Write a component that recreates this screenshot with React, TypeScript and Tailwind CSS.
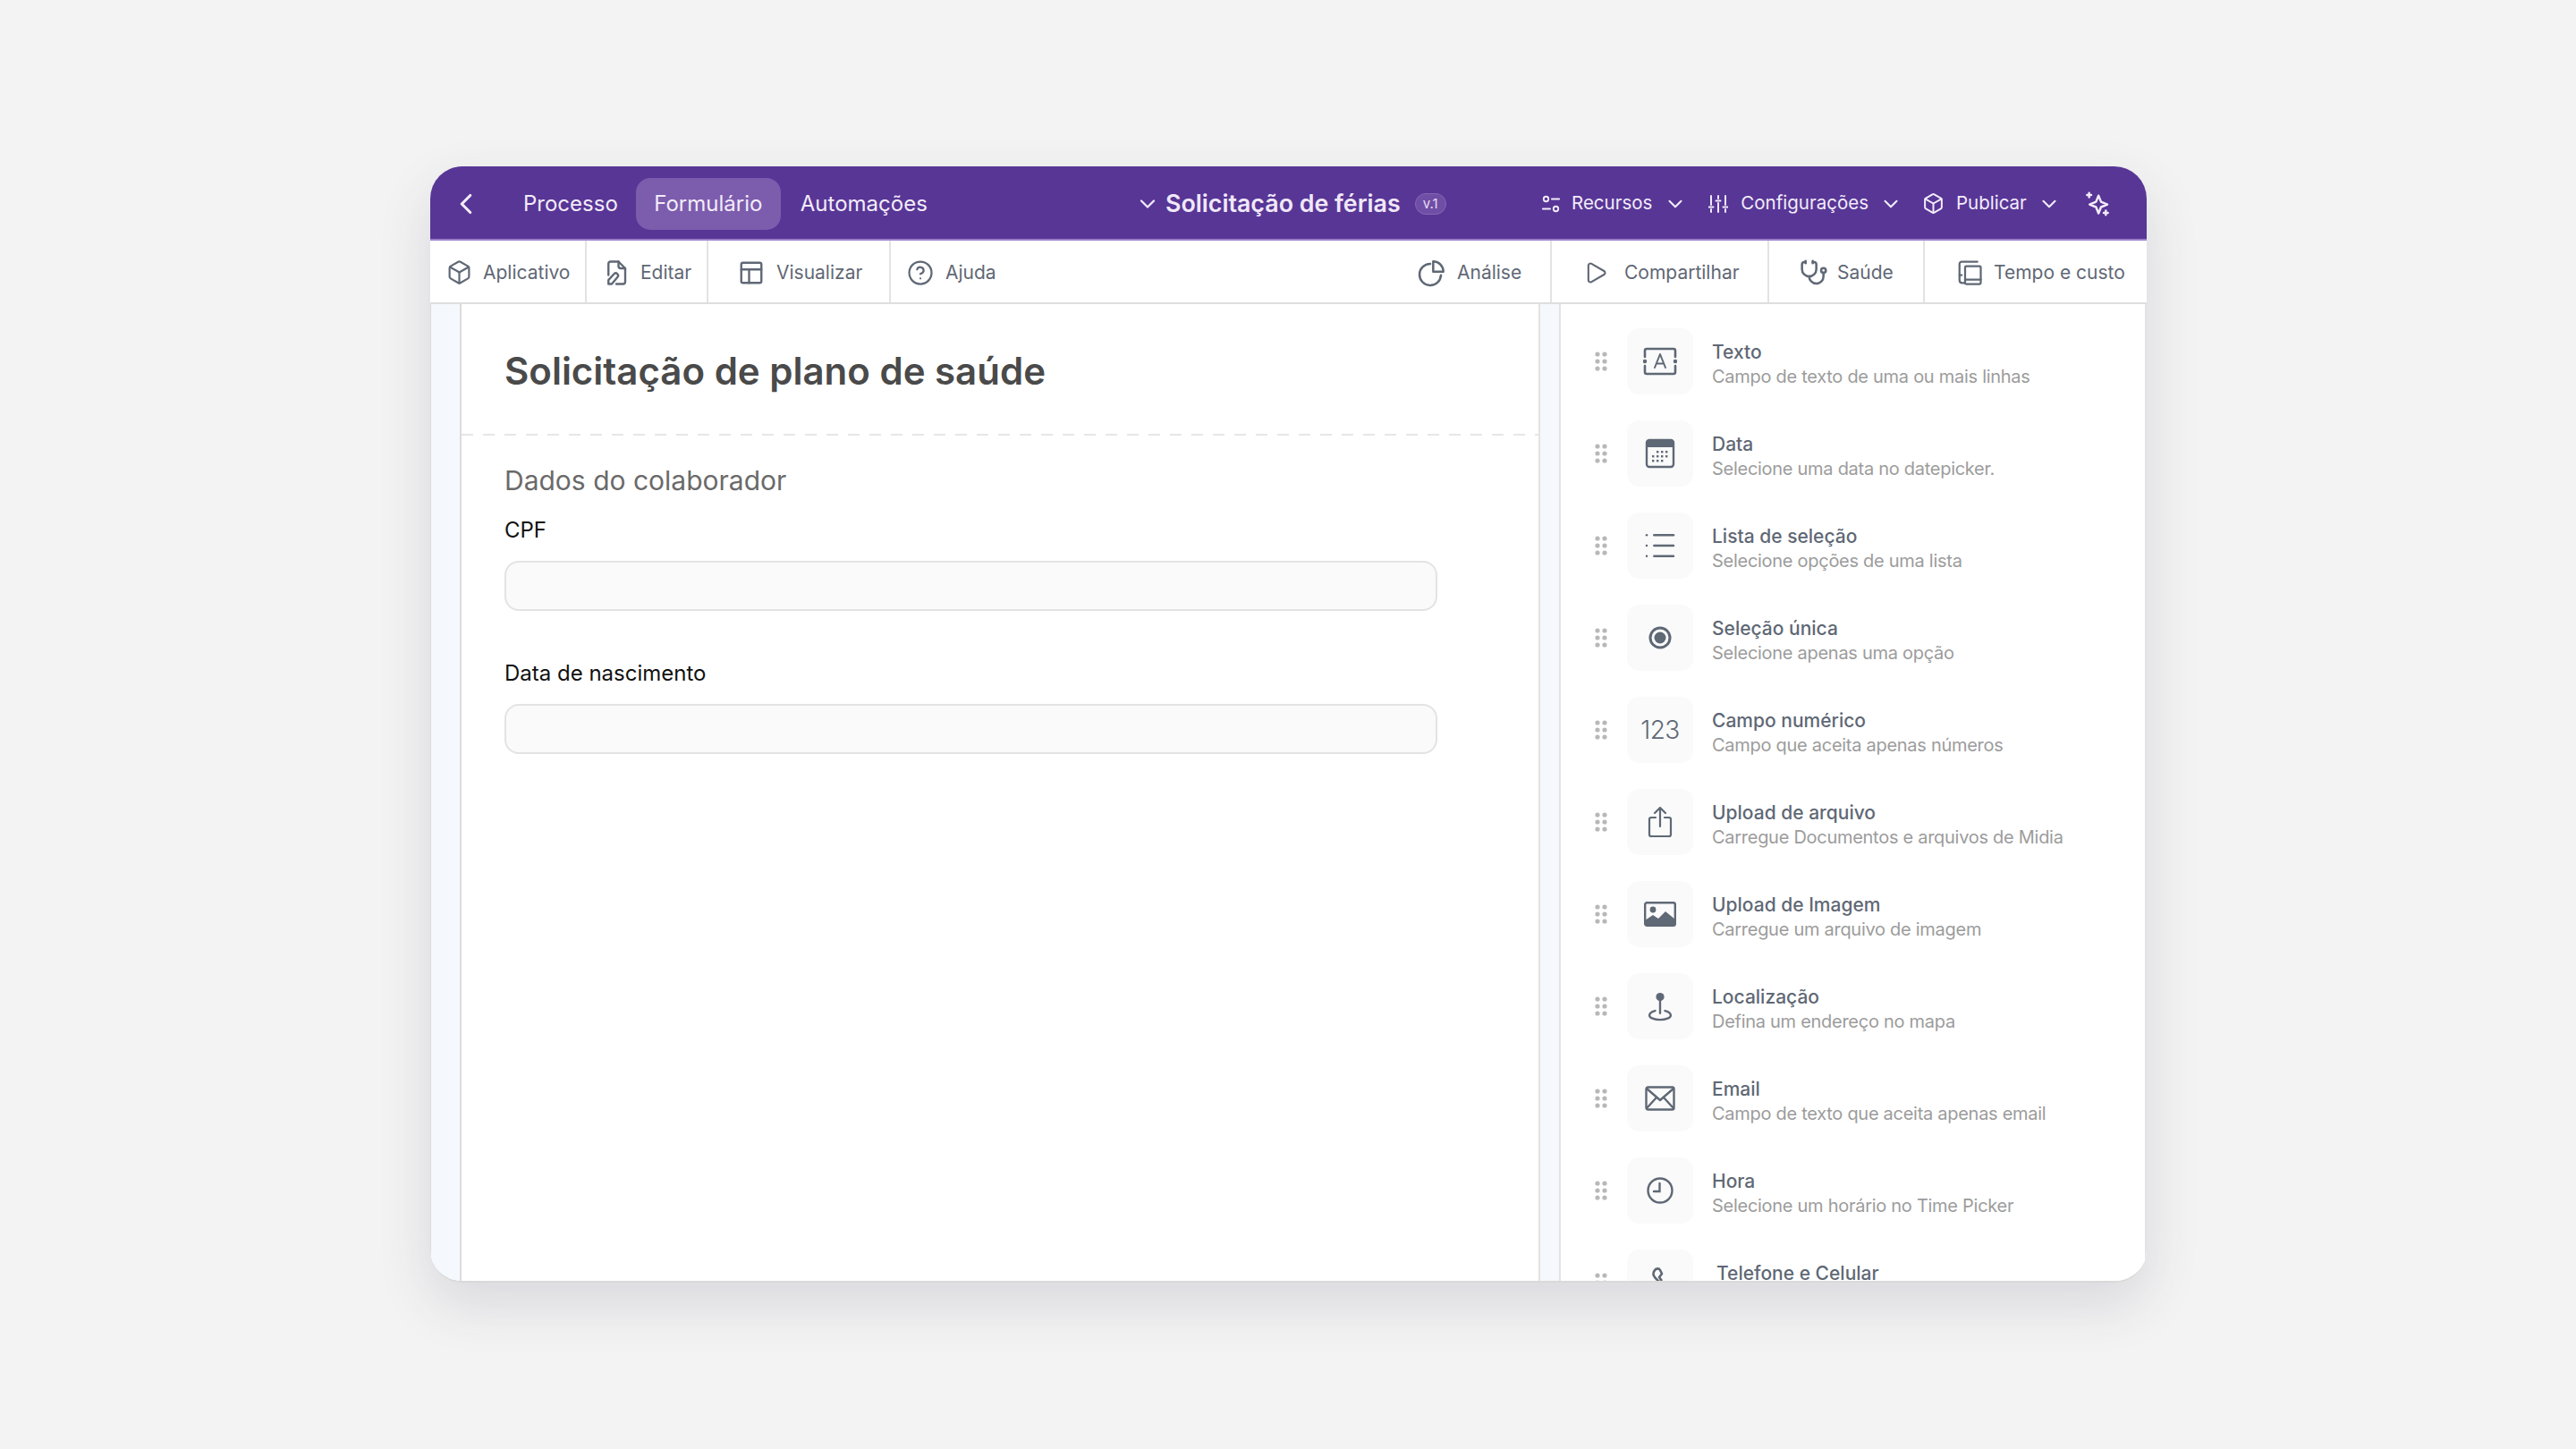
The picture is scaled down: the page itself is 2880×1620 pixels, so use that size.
import { Box, ChevronDown, ChevronLeft, CircleHelp, List, Play, Stethoscope } from 'lucide-react'
import type { ReactNode } from 'react'

const Ico = ({ size = 28, children, sw = 2 }: { size?: number; children: ReactNode; sw?: number }) => (
  <svg width={size} height={size} viewBox="0 0 24 24" fill="none" stroke="currentColor" strokeWidth={sw} strokeLinecap="round" strokeLinejoin="round" className="shrink-0">
    {children}
  </svg>
)

const Grip = () => (
  <svg width="14" height="22" viewBox="0 0 14 22" fill="#b8b8b8" className="shrink-0">
    <circle cx="3" cy="3" r="2.6" />
    <circle cx="11" cy="3" r="2.6" />
    <circle cx="3" cy="11" r="2.6" />
    <circle cx="11" cy="11" r="2.6" />
    <circle cx="3" cy="19" r="2.6" />
    <circle cx="11" cy="19" r="2.6" />
  </svg>
)

const fields: { title: string; sub?: string; icon: ReactNode }[] = [
  {
    title: 'Texto',
    sub: 'Campo de texto de uma ou mais linhas',
    icon: (
      <svg width="38" height="38" viewBox="0 0 38 38" fill="none" stroke="currentColor" strokeWidth="2.6" strokeLinecap="round" strokeLinejoin="round">
        <path d="M2 14V7a2 2 0 0 1 2-2h30a2 2 0 0 1 2 2v7M2 24v7a2 2 0 0 0 2 2h30a2 2 0 0 0 2-2v-7" />
        <circle cx="2" cy="19" r="1" fill="currentColor" />
        <circle cx="36" cy="19" r="1" fill="currentColor" />
        <path strokeWidth="2" d="M13 26l6-15 6 15M15 21.5h8" />
      </svg>
    ),
  },
  {
    title: 'Data',
    sub: 'Selecione uma data no datepicker.',
    icon: (
      <svg width="34" height="34" viewBox="0 0 34 34" fill="none">
        <rect x="2" y="2" width="30" height="30" rx="3" stroke="currentColor" strokeWidth="2.4" />
        <path d="M2 5a3 3 0 0 1 3-3h24a3 3 0 0 1 3 3v5H2z" fill="currentColor" />
        <g fill="currentColor">
          <rect x="13" y="14" width="2.4" height="2.4" />
          <rect x="18" y="14" width="2.4" height="2.4" />
          <rect x="23" y="14" width="2.4" height="2.4" />
          <rect x="8" y="19" width="2.4" height="2.4" />
          <rect x="13" y="19" width="2.4" height="2.4" />
          <rect x="18" y="19" width="2.4" height="2.4" />
          <rect x="23" y="19" width="2.4" height="2.4" />
          <rect x="8" y="24" width="2.4" height="2.4" />
          <rect x="13" y="24" width="2.4" height="2.4" />
          <rect x="18" y="24" width="2.4" height="2.4" />
        </g>
      </svg>
    ),
  },
  { title: 'Lista de seleção', sub: 'Selecione opções de uma lista', icon: <List size={40} strokeWidth={1.5} /> },
  {
    title: 'Seleção única',
    sub: 'Selecione apenas uma opção',
    icon: (
      <svg width="26" height="26" viewBox="0 0 26 26" fill="none">
        <circle cx="13" cy="13" r="11" stroke="currentColor" strokeWidth="3" />
        <circle cx="13" cy="13" r="6.5" fill="currentColor" />
      </svg>
    ),
  },
  {
    title: 'Campo numérico',
    sub: 'Campo que aceita apenas números',
    icon: <span className="text-[28px] leading-none font-light tracking-[-0.5px]">123</span>,
  },
  {
    title: 'Upload de arquivo',
    sub: 'Carregue Documentos e arquivos de Midia',
    icon: (
      <svg width="28" height="36" viewBox="0 0 28 36" fill="none" stroke="currentColor" strokeWidth="2.2" strokeLinecap="round" strokeLinejoin="round">
        <path d="M9 13H4a2 2 0 0 0-2 2v17a2 2 0 0 0 2 2h20a2 2 0 0 0 2-2V15a2 2 0 0 0-2-2h-5" />
        <path d="M14 23V2M8 8l6-6 6 6" />
      </svg>
    ),
  },
  {
    title: 'Upload de Imagem',
    sub: 'Carregue um arquivo de imagem',
    icon: (
      <svg width="36" height="28" viewBox="0 0 36 28" fill="none">
        <rect x="1.2" y="1.2" width="33.6" height="25.6" rx="2" stroke="currentColor" strokeWidth="2.4" />
        <circle cx="10" cy="9" r="3.4" fill="currentColor" />
        <path d="M1 27v-6l9-6 6 4 8-8 11 9v7z" fill="currentColor" />
      </svg>
    ),
  },
  {
    title: 'Localização',
    sub: 'Defina um endereço no mapa',
    icon: (
      <svg width="28" height="33" viewBox="0 0 30 36" fill="none" stroke="currentColor" strokeWidth="2.6" strokeLinecap="round">
        <circle cx="15" cy="6" r="5" fill="currentColor" stroke="none" />
        <path d="M15 10v16" />
        <path d="M9 23c-4 1-7 3-7 5.500C2 31.500 8 34 15 34s13-2.500 13-5.500c0-2.500-3-4.500-7-5.500" />
      </svg>
    ),
  },
  {
    title: 'Email',
    sub: 'Campo de texto que aceita apenas email',
    icon: (
      <svg width="34" height="28" viewBox="0 0 34 28" fill="none" stroke="currentColor" strokeWidth="2.4" strokeLinejoin="round">
        <rect x="1.5" y="1.5" width="31" height="25" rx="2" />
        <path d="M2 3l15 13L32 3M2 25l11-12M32 25L21 13" />
      </svg>
    ),
  },
  {
    title: 'Hora',
    sub: 'Selecione um horário no Time Picker',
    icon: (
      <svg width="30" height="30" viewBox="0 0 30 30" fill="none" stroke="currentColor" strokeWidth="2.4" strokeLinecap="round">
        <circle cx="15" cy="15" r="13.5" />
        <path d="M14.5 7v9H8" />
      </svg>
    ),
  },
  {
    title: 'Telefone e Celular',
    icon: (
      <svg width="36" height="36" viewBox="0 0 36 36" fill="none" stroke="currentColor" strokeWidth="2.6" strokeLinejoin="round" className="ml-[5px]">
        <path d="M14 17C8 12 5 8 10 3c2-1 4-1 5 1l2 4-3 4 3 4" />
      </svg>
    ),
  },
]

function Tool({ icon, label, w, pl, gap, border = true }: { icon: ReactNode; label: string; w: string; pl: string; gap: string; border?: boolean }) {
  return (
    <div className={`flex h-full items-center pt-[2px] ${w} ${pl} ${gap} ${border ? 'border-r-2 border-[#e3e3e3]' : ''}`}>
      {icon}
      <span className="text-[21px] leading-none whitespace-nowrap text-[#5f6875]">{label}</span>
    </div>
  )
}

export default function App() {
  return (
    <div className="h-[1620px] w-full overflow-hidden bg-[#f3f3f3] pt-[186px] font-['Inter',sans-serif]">
      <div className="ml-[481px] flex h-[1248px] w-[1919px] flex-col overflow-hidden rounded-[36px] border-b-2 border-[#d9d9d9] bg-white shadow-[0_24px_60px_rgba(60,60,90,0.14)]">
        <header className="flex h-[83px] shrink-0 items-center border-b-2 border-[#9a7fc8] bg-[#583696] pt-[2px] text-white">
          <div className="flex w-[788px] shrink-0 items-center">
            <ChevronLeft size={38} strokeWidth={2} className="ml-[21px] text-[#f2ecf9]" />
            <nav className="ml-[45px] flex items-center text-[24px] text-[#f2ecf9]">
              <span>Processo</span>
              <span className="ml-[20px] flex h-[58px] w-[162px] items-center justify-center rounded-[16px] bg-[#7c5cad]">Formulário</span>
              <span className="ml-[22px]">Automações</span>
            </nav>
          </div>
          <div className="flex w-[454px] shrink-0 items-center text-[#f0e8f8]">
            <ChevronDown size={28} strokeWidth={2} />
            <span className="ml-[6px] text-[26.8px] leading-none font-semibold">Solicitação de férias</span>
            <span className="ml-[16px] flex h-[24px] w-[35px] items-center justify-center rounded-full border border-[#8467b2] bg-[#6f4ea6] text-[15px] leading-none text-[#e6dcf3]">v.1</span>
          </div>
          <div className="flex items-center text-[20.5px] text-[#f2ecf9]">
            <Ico size={22}>
              <circle cx="6" cy="6" r="3" />
              <path d="M13 6h9M2 18h9" />
              <circle cx="18" cy="18" r="3" />
            </Ico>
            <span className="ml-[12px]">Recursos</span>
            <ChevronDown size={26} strokeWidth={1.9} className="ml-[13px]" />
            <svg width="22" height="20" viewBox="0 0 22 20" fill="none" stroke="currentColor" strokeWidth="2" strokeLinecap="round" className="ml-[24px] shrink-0">
              <path d="M3 1v10M3 16v3M0.500 13.500h5M11 1v3M11 9v10M8.500 6.500h5M19 1v10M19 16v3M16.500 13.500h5" />
            </svg>
            <span className="ml-[14px]">Configurações</span>
            <ChevronDown size={26} strokeWidth={1.9} className="ml-[12px]" />
            <Box size={25} strokeWidth={1.9} className="ml-[22px]" />
            <span className="ml-[13px]">Publicar</span>
            <ChevronDown size={26} strokeWidth={1.9} className="ml-[12px]" />
            <svg width="28" height="28" viewBox="0 0 24 24" fill="none" stroke="currentColor" strokeWidth="2.1" strokeLinecap="round" strokeLinejoin="round" className="ml-[27px] shrink-0">
              <path d="M13 4l2.400 6L21.500 12.500 15.400 15 13 21l-2.400-6-6.100-2.500L10.600 10z" />
              <path d="M4 1.500v4M2 3.500h4M20 18.500v4M18 20.500h4" />
            </svg>
          </div>
        </header>

        <div className="flex h-[71px] shrink-0 items-center border-b-2 border-[#dedede] bg-white text-[#5f6875]">
          <Tool w="w-[175px]" pl="pl-[18px]" gap="gap-[12px]" label="Aplicativo" icon={<Box size={29} strokeWidth={1.8} className="shrink-0" />} />
          <Tool
            w="w-[136px]"
            pl="pl-[18px]"
            gap="gap-[12px]"
            label="Editar"
            icon={
              <Ico size={30} sw={1.9}>
                <path d="M5 14V4a2 2 0 0 1 2-2h7l6 6v12a2 2 0 0 1-2 2h-6" />
                <path d="M14 2v4a2 2 0 0 0 2 2h4" />
                <path d="M5 22v-3.500L10 13a2 2 0 0 1 3 3l-5 6z" />
              </Ico>
            }
          />
          <Tool
            w="w-[204px]"
            pl="pl-[33px]"
            gap="gap-[13px]"
            label="Visualizar"
            icon={
              <Ico size={30} sw={1.9}>
                <rect x="3" y="3" width="18" height="18" rx="1.5" />
                <path d="M3 9h18M10 9v12" />
              </Ico>
            }
          />
          <Tool w="w-[200px]" pl="pl-[18px]" gap="gap-[13px]" border={false} label="Ajuda" icon={<CircleHelp size={30} strokeWidth={1.8} className="shrink-0" />} />
          <div className="flex-1" />
          <Tool
            w="w-[150px]"
            pl="pl-[0px]"
            gap="gap-[12px]"
            label="Análise"
            icon={
              <Ico size={32} sw={1.9}>
                <path d="M10.500 4.500a9 9 0 1 0 9 9.500" />
                <path d="M13 2.500a8.500 8.500 0 0 1 8.500 8.500H13z" />
              </Ico>
            }
          />
          <Tool w="w-[243px]" pl="pl-[35px]" gap="gap-[18px]" label="Compartilhar" icon={<Play size={28} strokeWidth={1.8} className="shrink-0" />} />
          <Tool w="w-[174px]" pl="pl-[34px]" gap="gap-[10px]" label="Saúde" icon={<Stethoscope size={32} strokeWidth={1.9} className="shrink-0" />} />
          <Tool
            w="w-[248px]"
            pl="pl-[35px]"
            gap="gap-[12px]"
            border={false}
            label="Tempo e custo"
            icon={
              <Ico size={30} sw={1.8}>
                <path d="M8 21H5.500C4 21 3 20 3 18.500V4c0-1 1-2 2-2h14" />
                <path d="M3 14h2" />
                <rect x="8" y="6" width="14" height="16" rx="1" />
                <path d="M8 18h14" />
              </Ico>
            }
          />
        </div>

        <div className="flex min-h-0 flex-1">
          <div className="w-[35px] shrink-0 border-r-2 border-l border-[#dcdcdc] bg-[#f5f8fc]" />
          <main className="flex-1 bg-white">
            <div className="h-[145px] pt-[47px] pl-[48px]">
              <h1 className="text-[42px] leading-[56px] font-semibold text-[#4a4a4a]">Solicitação de plano de saúde</h1>
            </div>
            <div className="h-[2px] bg-[repeating-linear-gradient(90deg,#e6e6e6_0_13px,transparent_13px_24px)]" />
            <div className="px-[48px] pt-[30px]">
              <h2 className="text-[30px] leading-[40px] text-[#6a6a6a]">Dados do colaborador</h2>
              <label className="mt-[20px] block text-[24px] leading-[32px] text-[#111]">CPF</label>
              <div className="mt-[18px] h-[56px] w-[1043px] rounded-[16px] border-2 border-[#e3e3e3] bg-[#fafafa]" />
              <label className="mt-[54px] block text-[24px] leading-[32px] text-[#111]">Data de nascimento</label>
              <div className="mt-[18px] h-[56px] w-[1043px] rounded-[16px] border-2 border-[#e3e3e3] bg-[#fafafa]" />
            </div>
          </main>
          <div className="w-[25px] shrink-0 border-x-2 border-[#e3e3e3] bg-[#f5f8fc]" />
          <aside className="flex w-[655px] shrink-0 flex-col gap-[29px] overflow-hidden border-r-2 border-[#e3e3e3] bg-white pt-[27px] pl-[38px]">
            {fields.map((f) => (
              <div key={f.title} className="flex h-[74px] shrink-0 items-center">
                <Grip />
                <div className="ml-[22px] flex h-[74px] w-[74px] shrink-0 items-center justify-center rounded-[14px] bg-[#fafafa] text-[#5f6875]">{f.icon}</div>
                <div className={`h-full self-start pt-[13px] whitespace-nowrap ${f.sub ? 'ml-[21px]' : 'ml-[26px]'}`}>
                  <div className="text-[21px] leading-[28px] font-medium text-[#5f6875]">{f.title}</div>
                  {f.sub && <div className="text-[20px] leading-[27px] tracking-[-0.28px] text-[#9c9c9c]">{f.sub}</div>}
                </div>
              </div>
            ))}
          </aside>
        </div>
      </div>
    </div>
  )
}
